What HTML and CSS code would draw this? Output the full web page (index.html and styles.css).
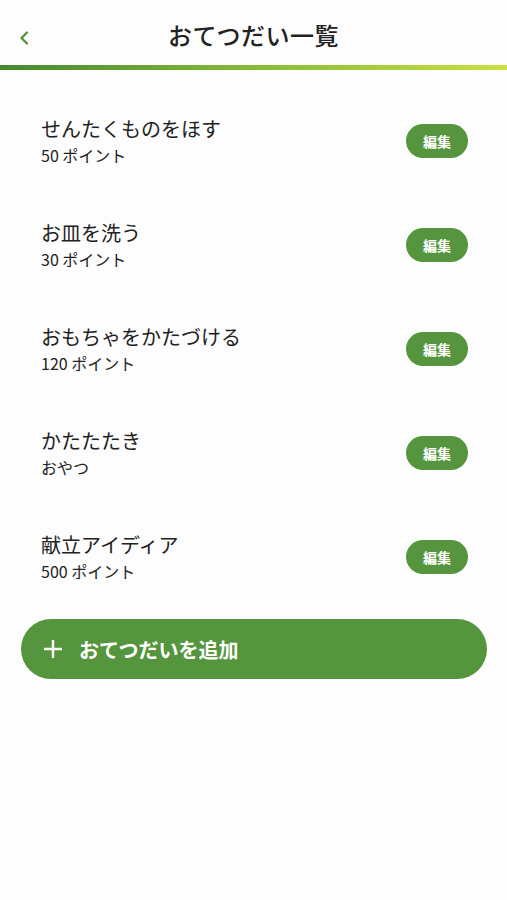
FILE: index.html
```html
<!DOCTYPE html>
<html lang="ja">
<head>
    <meta charset="UTF-8">
    <meta name="viewport" content="width=device-width, initial-scale=1.0">
    <title>おてつだい一覧</title>
    <link rel="stylesheet" href="styles.css">
</head>
<body>
    <header class="header">
        <button class="back" aria-label="戻る">
            <svg width="12" height="14" viewBox="0 0 12 14"><path d="M9 1.5 L3.5 7 L9 12.5" fill="none" stroke="#4f8f36" stroke-width="2.2" stroke-linecap="round" stroke-linejoin="round"/></svg>
        </button>
        <h1 class="title">おてつだい一覧</h1>
    </header>
    <div class="header-line"></div>

    <ul class="task-list">
        <li class="task">
            <div class="task-info">
                <div class="task-name">せんたくものをほす</div>
                <div class="task-reward">50 ポイント</div>
            </div>
            <button class="edit">編集</button>
        </li>
        <li class="task">
            <div class="task-info">
                <div class="task-name">お皿を洗う</div>
                <div class="task-reward">30 ポイント</div>
            </div>
            <button class="edit">編集</button>
        </li>
        <li class="task">
            <div class="task-info">
                <div class="task-name">おもちゃをかたづける</div>
                <div class="task-reward">120 ポイント</div>
            </div>
            <button class="edit">編集</button>
        </li>
        <li class="task">
            <div class="task-info">
                <div class="task-name">かたたたき</div>
                <div class="task-reward">おやつ</div>
            </div>
            <button class="edit">編集</button>
        </li>
        <li class="task">
            <div class="task-info">
                <div class="task-name">献立アイディア</div>
                <div class="task-reward">500 ポイント</div>
            </div>
            <button class="edit">編集</button>
        </li>
    </ul>

    <div class="add-wrap">
        <button class="add">
            <svg width="20" height="20" viewBox="0 0 20 20"><path d="M10 1 V19 M1 10 H19" stroke="#fff" stroke-width="2.4"/></svg>
            <span>おてつだいを追加</span>
        </button>
    </div>
</body>
</html>
```

FILE: styles.css
```css
body {
    margin: 0;
    background-color: #fdfdfd;
    font-family: "Noto Sans CJK JP", "Noto Sans", sans-serif;
    color: #222;
}

.header {
    height: 61px;
    padding-top: 4px;
    display: flex;
    align-items: center;
    justify-content: center;
    position: relative;
}

.back {
    position: absolute;
    left: 16px;
    top: 30px;
    background: none;
    border: none;
    padding: 0;
    width: 16px;
    height: 16px;
    display: flex;
    align-items: center;
    justify-content: center;
}

.title {
    margin: 0;
    font-size: 24px;
    font-weight: 500;
    color: #222;
    letter-spacing: 0.5px;
}

.header-line {
    height: 5px;
    background: linear-gradient(to right, #45892f, #8cbf3a 55%, #c9e03f);
}

.task-list {
    list-style: none;
    margin: 0;
    padding: 18px 0 0;
}

.task {
    height: 104px;
    display: flex;
    align-items: center;
    justify-content: space-between;
    padding: 0 39px 0 41px;
}

.task-name {
    font-size: 20px;
    line-height: 28px;
    color: #222;
}

.task-reward {
    font-size: 16px;
    line-height: 22px;
    color: #222;
    margin-top: 1px;
}

.edit {
    width: 62px;
    height: 34px;
    border: none;
    border-radius: 17px;
    background-color: #55953d;
    color: #fff;
    font-family: "Noto Sans CJK JP", sans-serif;
    font-size: 14px;
    font-weight: 700;
    margin-top: 1px;
}

.add-wrap {
    padding: 11px 20px 0 21px;
}

.add {
    width: 100%;
    height: 60px;
    border: none;
    border-radius: 30px;
    background-color: #55953d;
    color: #fff;
    display: flex;
    align-items: center;
    gap: 16px;
    padding: 0 0 0 22px;
    font-family: "Noto Sans CJK JP", sans-serif;
    font-size: 20px;
    font-weight: 700;
}
```
